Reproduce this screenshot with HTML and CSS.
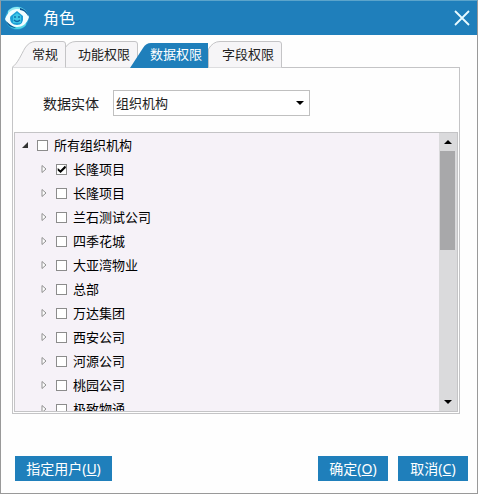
FILE: index.html
```html
<!DOCTYPE html>
<html lang="zh-CN">
<head>
    <meta charset="UTF-8">
    <meta name="viewport" content="width=device-width, initial-scale=1.0">
    <title>角色</title>
    <link rel="stylesheet" href="styles.css">
</head>
<body>
    <div class="dialog">
        <div class="title-bar">
            <svg class="logo" viewBox="0 0 24 24">
                <circle cx="12" cy="12" r="11.500" fill="#2aa9d8"/>
                <path d="M3 5C8 -1 18 0 22 7C17 3 9 3 3 8Z" fill="#8fe9f2"/>
                <path d="M21 19C16 25 6 24 2 17C7 21 15 21 21 16Z" fill="#54d7e6"/>
                <path d="M0 13C3 5 8 3 13 3C18 3 22 7 24 11C22 18 17 21 12 21C6 21 2 18 0 13Z" fill="#f2fdff"/>
                <path d="M15 2C20 3 23 7 23 10C21 6 18 4 15 4Z" fill="#0a5793"/>
                <path d="M1 15C3 20 7 22 11 22C7 20 4 18 1 15Z" fill="#0a5793"/>
                <path d="M5 12Q5 10 7 9L12 5L18 10Q19 19 12 19Q5 19 5 12Z" fill="#1d9fd6"/>
                <path d="M8 10L12 7L16 10V17H8Z" fill="#3fc6e6"/>
                <path d="M10 10v2M14 10v2M9 14q3 3 6 0" fill="none" stroke="#0b68a6" stroke-width="1.3"/>
            </svg>
            <h1>角色</h1>
            <button class="close" type="button" aria-label="关闭">
                <svg viewBox="0 0 16 16"><path d="M1 1L15 15M15 1L1 15" fill="none" stroke="#e8fbff" stroke-width="1.8"/></svg>
            </button>
        </div>

        <div class="main">
            <!-- 选项卡 -->
            <div class="tabs" role="tablist">
                <button class="tab tab-first" type="button" role="tab">
                    <svg viewBox="0 0 54 27"><path d="M0 26.500C6 22 9 14 13 7Q17 .5 24 .5H51Q53.500 .5 53.500 3V26.500"/></svg>
                    <span>常规</span>
                </button>
                <button class="tab" type="button" role="tab">
                    <svg viewBox="0 0 86 27"><path d="M0 26.500C6 22 9 14 13 7Q17 .5 24 .5H83Q85.500 .5 85.500 3V26.500"/></svg>
                    <span>功能权限</span>
                </button>
                <button class="tab tab-active" type="button" role="tab" aria-selected="true">
                    <svg viewBox="0 0 78 27"><path d="M0 27L13 7Q16 2 21 2H78V27Z"/></svg>
                    <span>数据权限</span>
                </button>
                <button class="tab tab-last" type="button" role="tab">
                    <svg viewBox="0 0 86 27"><path d="M12.500 26.500V8Q17 .5 24 .5H83Q85.500 .5 85.500 3V26.500"/></svg>
                    <span>字段权限</span>
                </button>
            </div>

            <div class="panel">
                <div class="field">
                    <label for="entity">数据实体</label>
                    <select id="entity" class="entity">
                        <option>组织机构</option>
                    </select>
                </div>

                <!-- 组织机构树 -->
                <div class="tree-box">
                    <ul class="tree">
                        <li class="root"><i class="arrow-open"></i><label><input type="checkbox">所有组织机构</label></li>
                        <li><i class="arrow"></i><label><input type="checkbox" checked>长隆项目</label></li>
                        <li><i class="arrow"></i><label><input type="checkbox">长隆项目</label></li>
                        <li><i class="arrow"></i><label><input type="checkbox">兰石测试公司</label></li>
                        <li><i class="arrow"></i><label><input type="checkbox">四季花城</label></li>
                        <li><i class="arrow"></i><label><input type="checkbox">大亚湾物业</label></li>
                        <li><i class="arrow"></i><label><input type="checkbox">总部</label></li>
                        <li><i class="arrow"></i><label><input type="checkbox">万达集团</label></li>
                        <li><i class="arrow"></i><label><input type="checkbox">西安公司</label></li>
                        <li><i class="arrow"></i><label><input type="checkbox">河源公司</label></li>
                        <li><i class="arrow"></i><label><input type="checkbox">桃园公司</label></li>
                        <li><i class="arrow"></i><label><input type="checkbox">极致物通</label></li>
                    </ul>
                    <div class="scrollbar">
                        <button class="scroll-btn" type="button" aria-label="向上"><i class="up"></i></button>
                        <div class="track"><div class="thumb"></div></div>
                        <button class="scroll-btn" type="button" aria-label="向下"><i class="down"></i></button>
                    </div>
                </div>
            </div>
        </div>

        <div class="footer">
            <button class="btn btn-user" type="button">指定用户(<u>U</u>)</button>
            <button class="btn" type="button">确定(<u>O</u>)</button>
            <button class="btn" type="button">取消(<u>C</u>)</button>
        </div>
    </div>
</body>
</html>
```

FILE: styles.css
```css
*{box-sizing: border-box;}
body{
    margin: 0;
    font-family: "Noto Sans", "Noto Sans CJK SC", sans-serif;
    font-size: 13px;
    color: #222;
}
button, select, input{
    margin: 0;
    padding: 0;
    border: 0;
    border-radius: 0;
    font: inherit;
    color: inherit;
    background: none;
}
.dialog{
    display: flex;
    flex-direction: column;
    height: 100vh;
    border: 1px solid #999;
    border-top-color: #5ba4cb;
    background-color: #fefefe;
}

/* 标题栏 */
.title-bar{
    display: flex;
    align-items: center;
    height: 34px;
    padding: 0 7px 0 4px;
    flex-shrink: 0;
    background-color: #1f7fbb;
    color: #fff;
}
.logo{
    width: 24px;
    height: 24px;
}
.title-bar h1{
    flex: 1;
    margin: 0 0 0 14px;
    font-size: 16px;
    line-height: 24px;
    font-weight: normal;
}
.close{
    width: 16px;
    height: 16px;
}
.close svg{
    display: block;
}

/* 选项卡 */
.main{
    flex: 1;
    min-height: 0;
    display: flex;
    flex-direction: column;
    padding: 6px 17px 0 11px;
}
.tabs{
    display: flex;
    height: 27px;
    flex-shrink: 0;
    isolation: isolate;
}
.tab{
    display: grid;
    width: 86px;
    height: 27px;
    margin-left: -14px;
    line-height: 27px;
    text-align: right;
}
.tab svg, .tab span{
    grid-area: 1 / 1;
}
.tab svg{
    width: 100%;
    height: 27px;
    fill: #f6f5f7;
    stroke: #c4c4c6;
}
.tab span{
    padding-right: 8px;
    z-index: 1;
}
.tab-first{
    width: 54px;
    margin-left: 0;
    z-index: 2;
}
.tab-active{
    width: 78px;
    margin-left: -8px;
    z-index: 3;
    color: #fff;
}
.tab-active svg{
    fill: #1f7fbb;
    stroke: none;
}
.tab.tab-active span{
    padding-right: 6px;
}
.tab-last{
    margin-left: -12px;
    z-index: 1;
}

.panel{
    flex: 1;
    min-height: 0;
    display: flex;
    flex-direction: column;
    margin-top: -1px;
    padding: 22px 1px 1px;
    border: 1px solid #c4c4c6;
}
.field{
    display: flex;
    align-items: center;
    height: 26px;
    margin: 0 0 16px 29px;
    flex-shrink: 0;
}
.field label{
    width: 70px;
    font-size: 14px;
}
.entity{
    appearance: none;
    width: 197px;
    height: 26px;
    padding-left: 2px;
    border: 1px solid #c0c0c0;
    background: #fff url("data:image/svg+xml,%3Csvg xmlns='http://www.w3.org/2000/svg' width='8' height='4'%3E%3Cpath d='M0 0H8L4 4Z'/%3E%3C/svg%3E") no-repeat right 5px center;
}

/* 树 */
.tree-box{
    display: flex;
    flex: 1;
    min-height: 0;
    border: 1px solid #c4c4c6;
}
.tree{
    flex: 1;
    margin: 0;
    padding: 0 0 0 26px;
    overflow: hidden;
    list-style: none;
    color: #000;
    background-color: #f6f2f8;
}
.tree li{
    display: flex;
    align-items: center;
    height: 24px;
}
.tree .root{
    margin-left: -19px;
}
.tree label{
    display: flex;
    align-items: center;
    gap: 6px;
    padding-bottom: 2px;
}
.tree input{
    appearance: none;
    width: 11px;
    height: 11px;
    margin-top: 2px;
    border: 1px solid #8c8c8c;
    background-color: #fff;
}
.tree input:checked::before{
    content: "";
    display: block;
    width: 9px;
    height: 9px;
    background-color: #000;
    clip-path: polygon(8% 40%, 38% 65%, 90% 10%, 100% 35%, 40% 95%, 8% 68%);
}
.arrow, .arrow-open{
    width: 15px;
    height: 8px;
    background: url("data:image/svg+xml,%3Csvg xmlns='http://www.w3.org/2000/svg' width='6' height='8'%3E%3Cpath d='M1 .5L5 4L1 7.500Z' fill='%23fff' stroke='%23909090'/%3E%3C/svg%3E") no-repeat;
}
.arrow-open{
    background-image: url("data:image/svg+xml,%3Csvg xmlns='http://www.w3.org/2000/svg' width='6' height='7'%3E%3Cpath d='M6 1V7H0Z' fill='%23333'/%3E%3C/svg%3E");
}

/* 滚动条 */
.scrollbar{
    display: flex;
    flex-direction: column;
    width: 18px;
    background-color: #dadadc;
}
.scroll-btn{
    display: flex;
    align-items: center;
    justify-content: center;
    height: 18px;
}
.track{
    flex: 1;
    padding: 0 2px 0 1px;
}
.thumb{
    height: 41%;
    background-color: #a8a8aa;
}
.up, .down{
    width: 8px;
    height: 4px;
    background-color: #000;
    clip-path: polygon(50% 0, 100% 100%, 0 100%);
}
.down{
    clip-path: polygon(0 0, 100% 0, 50% 100%);
}

/* 底部按钮 */
.footer{
    display: flex;
    gap: 10px;
    padding: 42px 9px 12px 14px;
    flex-shrink: 0;
}
.btn{
    width: 70px;
    height: 25px;
    font-size: 14px;
    line-height: 25px;
    color: #fff;
    background-color: #1f7fbb;
}
.btn-user{
    width: 97px;
    margin-right: auto;
}
```
